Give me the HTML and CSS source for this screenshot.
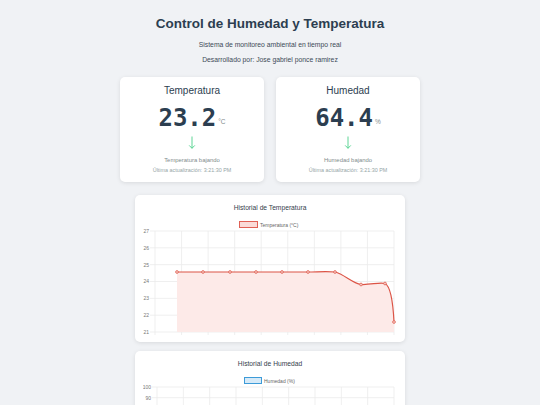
FILE: index.html
```html
<!DOCTYPE html>
<html lang="es">
<head>
<meta charset="utf-8">
<title>Control de Humedad y Temperatura</title>
<link rel="stylesheet" href="styles.css">
</head>
<body>
<div class="container">
  <header class="header">
    <h1 class="title">Control de Humedad y Temperatura</h1>
    <p class="subtitle">Sistema de monitoreo ambiental en tiempo real</p>
    <p class="subtitle">Desarrollado por: Jose gabriel ponce ramirez</p>
  </header>

  <section class="cards">
    <div class="card">
      <h2 class="card-title">Temperatura</h2>
      <div class="value"><span class="number">23.2</span><span class="unit">°C</span></div>
      <svg class="arrow" width="8" height="13" viewBox="0 0 8 13"><path d="M4 0.5V12.3M1.2 9.4L4 12.3L6.8 9.4" fill="none" stroke="#4cd08a" stroke-width="0.9"/></svg>
      <p class="trend">Temperatura bajando</p>
      <p class="updated">Última actualización: 3:21:30 PM</p>
    </div>
    <div class="card">
      <h2 class="card-title">Humedad</h2>
      <div class="value"><span class="number">64.4</span><span class="unit">%</span></div>
      <svg class="arrow" width="8" height="13" viewBox="0 0 8 13"><path d="M4 0.5V12.3M1.2 9.4L4 12.3L6.8 9.4" fill="none" stroke="#4cd08a" stroke-width="0.9"/></svg>
      <p class="trend">Humedad bajando</p>
      <p class="updated">Última actualización: 3:21:30 PM</p>
    </div>
  </section>

  <section class="chart-card">
    <h3 class="chart-title">Historial de Temperatura</h3>
    <svg class="chart" width="254" height="120" viewBox="0 0 254 120">
      <rect x="96.5" y="4.5" width="18" height="6" fill="#fadbd8" stroke="#e06055" stroke-width="1"/>
      <text x="117" y="9.6" class="legend-text">Temperatura (°C)</text>
      <g stroke="#ebebeb" stroke-width="0.8">
        <line x1="7" y1="14" x2="251" y2="14"/>
        <line x1="7" y1="30.83" x2="251" y2="30.83"/>
        <line x1="7" y1="47.67" x2="251" y2="47.67"/>
        <line x1="7" y1="64.5" x2="251" y2="64.5"/>
        <line x1="7" y1="81.33" x2="251" y2="81.33"/>
        <line x1="7" y1="98.17" x2="251" y2="98.17"/>
        <line x1="7" y1="115" x2="251" y2="115"/>
        <line x1="12" y1="14" x2="12" y2="118"/>
        <line x1="38.56" y1="14" x2="38.56" y2="118"/>
        <line x1="65.11" y1="14" x2="65.11" y2="118"/>
        <line x1="91.67" y1="14" x2="91.67" y2="118"/>
        <line x1="118.22" y1="14" x2="118.22" y2="118"/>
        <line x1="144.78" y1="14" x2="144.78" y2="118"/>
        <line x1="171.33" y1="14" x2="171.33" y2="118"/>
        <line x1="197.89" y1="14" x2="197.89" y2="118"/>
        <line x1="224.44" y1="14" x2="224.44" y2="118"/>
        <line x1="251" y1="14" x2="251" y2="118"/>
      </g>
      <g class="axis-text" text-anchor="end">
        <text x="6" y="15.8">27</text>
        <text x="6" y="32.6">26</text>
        <text x="6" y="49.5">25</text>
        <text x="6" y="66.3">24</text>
        <text x="6" y="83.1">23</text>
        <text x="6" y="100">22</text>
        <text x="6" y="116.8">21</text>
      </g>
      <path d="M34,55 L165,55 C174,55 183,54 192,55 C201,57 209,66 218,67.5 C228,68 236,65 242,66.5 C247,69 250,85 251,105 L251,115 L34,115 Z" fill="#fdeae8" stroke="none"/>
      <path d="M34,55 L165,55 C174,55 183,54 192,55 C201,57 209,66 218,67.5 C228,68 236,65 242,66.5 C247,69 250,85 251,105" fill="none" stroke="#dc5446" stroke-width="1.2"/>
      <g fill="#f6c9c4" stroke="#dc5446" stroke-width="0.7">
        <circle cx="34" cy="55" r="1.4"/>
        <circle cx="60" cy="55" r="1.4"/>
        <circle cx="87" cy="55" r="1.4"/>
        <circle cx="113" cy="55" r="1.4"/>
        <circle cx="139" cy="55" r="1.4"/>
        <circle cx="165" cy="55" r="1.4"/>
        <circle cx="192" cy="55" r="1.4"/>
        <circle cx="218" cy="67.5" r="1.4"/>
        <circle cx="242" cy="66.5" r="1.4"/>
        <circle cx="251" cy="105" r="1.4"/>
      </g>
    </svg>
  </section>

  <section class="chart-card">
    <h3 class="chart-title">Historial de Humedad</h3>
    <svg class="chart" width="254" height="126" viewBox="0 0 254 126">
      <rect x="101.5" y="4.5" width="17" height="6" fill="#d6eaf8" stroke="#3d9bd8" stroke-width="1"/>
      <text x="121" y="9.6" class="legend-text">Humedad (%)</text>
      <g stroke="#ebebeb" stroke-width="0.8">
        <line x1="9" y1="14" x2="251" y2="14"/>
        <line x1="9" y1="24.7" x2="251" y2="24.7"/>
        <line x1="9" y1="35.4" x2="251" y2="35.4"/>
        <line x1="9" y1="46.1" x2="251" y2="46.1"/>
        <line x1="9" y1="56.8" x2="251" y2="56.8"/>
        <line x1="9" y1="67.5" x2="251" y2="67.5"/>
        <line x1="9" y1="78.2" x2="251" y2="78.2"/>
        <line x1="9" y1="88.9" x2="251" y2="88.9"/>
        <line x1="9" y1="99.6" x2="251" y2="99.6"/>
        <line x1="9" y1="110.3" x2="251" y2="110.3"/>
        <line x1="9" y1="121" x2="251" y2="121"/>
        <line x1="14" y1="14" x2="14" y2="124"/>
        <line x1="40.33" y1="14" x2="40.33" y2="124"/>
        <line x1="66.67" y1="14" x2="66.67" y2="124"/>
        <line x1="93" y1="14" x2="93" y2="124"/>
        <line x1="119.33" y1="14" x2="119.33" y2="124"/>
        <line x1="145.67" y1="14" x2="145.67" y2="124"/>
        <line x1="172" y1="14" x2="172" y2="124"/>
        <line x1="198.33" y1="14" x2="198.33" y2="124"/>
        <line x1="224.67" y1="14" x2="224.67" y2="124"/>
        <line x1="251" y1="14" x2="251" y2="124"/>
      </g>
      <g class="axis-text" text-anchor="end">
        <text x="8" y="15.8">100</text>
        <text x="8" y="26.5">90</text>
        <text x="8" y="37.2">80</text>
        <text x="8" y="47.9">70</text>
        <text x="8" y="58.6">60</text>
        <text x="8" y="69.3">50</text>
        <text x="8" y="80">40</text>
        <text x="8" y="90.7">30</text>
        <text x="8" y="101.4">20</text>
        <text x="8" y="112.1">10</text>
        <text x="8" y="122.8">0</text>
      </g>
      <path d="M36,52 L244,52 L251,52 L251,121 L36,121 Z" fill="#e4f1fb" stroke="none"/>
      <path d="M36,52 L251,52" fill="none" stroke="#3d9bd8" stroke-width="1.2"/>
    </svg>
  </section>
</div>
</body>
</html>
```

FILE: styles.css
```css
html, body {
  margin: 0;
  padding: 0;
}

body {
  background: #f0f2f5;
  font-family: "Liberation Sans", Arial, sans-serif;
  color: #2c3e50;
}

.container {
  width: 300px;
  margin: 0 auto;
  padding: 16px 0 20px;
}

.header {
  text-align: center;
}

.title {
  margin: 0 0 8px;
  font-size: 13.5px;
  line-height: 16px;
  font-weight: bold;
  color: #2c3e50;
}

.subtitle {
  margin: 0 0 5px;
  font-size: 6.8px;
  line-height: 10px;
  color: #3d4a57;
}

.subtitle:last-child {
  margin-bottom: 0;
}

.cards {
  display: grid;
  grid-template-columns: 1fr 1fr;
  gap: 12px;
  margin-top: 12px;
}

.card {
  background: #fff;
  border-radius: 5px;
  box-shadow: 0 1px 4px rgba(0, 0, 0, 0.1);
  padding: 8px 6px 8px;
  display: flex;
  flex-direction: column;
  align-items: center;
  text-align: center;
}

.card-title {
  margin: 0;
  font-size: 10px;
  line-height: 12px;
  font-weight: normal;
  color: #2c3e50;
}

.value {
  margin-top: 7px;
  height: 28px;
  display: flex;
  align-items: baseline;
}

.number {
  font-family: "DejaVu Sans Mono", monospace;
  font-weight: bold;
  font-size: 24px;
  line-height: 28px;
  color: #2c3e50;
}

.unit {
  font-size: 6.5px;
  margin-left: 2px;
  color: #7f8c8d;
  position: relative;
  top: -2px;
}

.arrow {
  display: block;
  margin-top: 4px;
}

.trend {
  margin: 7px 0 0;
  font-size: 5.9px;
  line-height: 8px;
  color: #7f8c8d;
}

.updated {
  margin: 3px 0 0;
  font-size: 5.4px;
  line-height: 7px;
  color: #95a5a6;
}

.chart-card {
  margin: 13px 15px 0;
  background: #fff;
  border-radius: 5px;
  box-shadow: 0 1px 4px rgba(0, 0, 0, 0.1);
  padding: 9px 8px 5px;
}

.chart-card + .chart-card {
  margin-top: 9px;
}

.chart-title {
  margin: 0 0 5px;
  text-align: center;
  font-size: 6.7px;
  line-height: 8px;
  font-weight: normal;
  color: #34404c;
}

.chart {
  display: block;
}

.legend-text {
  font-family: "Liberation Sans", Arial, sans-serif;
  font-size: 5px;
  fill: #666;
}

.axis-text {
  font-family: "Liberation Sans", Arial, sans-serif;
  font-size: 5px;
  fill: #777;
}
```
